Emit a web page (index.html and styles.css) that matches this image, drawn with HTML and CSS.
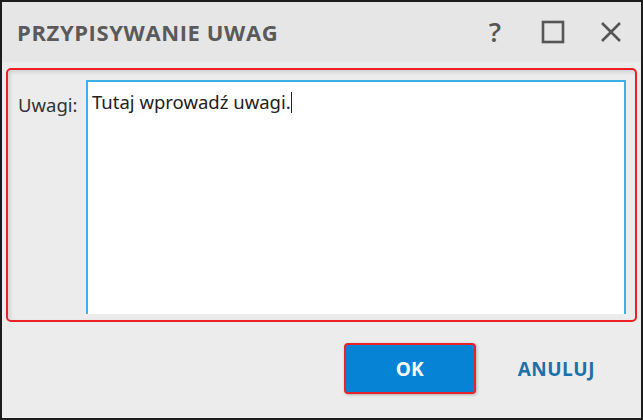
FILE: index.html
```html
<!DOCTYPE html>
<html lang="pl">
  <head>
    <meta charset="utf-8" />
    <meta name="viewport" content="width=device-width, initial-scale=1" />
    <title>Przypisywanie uwag</title>
    <link rel="stylesheet" href="styles.css">
  </head>
  <body>
    <div class="dialog">
        <!-- pasek tytulu z ikonami -->
        <div class="titlebar">
            <h1 class="title">PRZYPISYWANIE UWAG</h1>
            <div class="tools">
                <span class="tool help">?</span>
                <span class="tool">
                    <svg width="24" height="24" viewBox="0 0 24 24"><rect x="2" y="2" width="20" height="20" fill="none" stroke="#555" stroke-width="2.6"/></svg>
                </span>
                <span class="tool">
                    <svg width="24" height="24" viewBox="0 0 24 24"><path d="M3 3 L21 21 M21 3 L3 21" stroke="#555" stroke-width="2.6" fill="none"/></svg>
                </span>
            </div>
        </div>
        <!-- pole uwag -->
        <div class="content">
            <label class="label" for="notes">Uwagi:</label>
            <div class="notes" id="notes">Tutaj wprowadź uwagi.<span class="caret"></span></div>
        </div>
        <div class="footer">
            <button type="button" class="btn-ok">OK</button>
            <button type="button" class="btn-cancel">ANULUJ</button>
        </div>
    </div>
  </body>
</html>
```

FILE: styles.css
```css
html, body {
    margin: 0;
    padding: 0;
}

body {
    font-family: "Noto Sans", "Open Sans", sans-serif;
}

.dialog {
    width: 643px;
    height: 420px;
    box-sizing: border-box;
    border: 2px solid #1c1c1c;
    background-color: #ececec;
    display: flex;
    flex-direction: column;
}

.titlebar {
    height: 60px;
    flex-shrink: 0;
    background-color: #e6e6e6;
    display: flex;
    align-items: center;
    justify-content: space-between;
    padding: 0 18px 0 15px;
}

.title {
    margin: 0;
    font-family: "Open Sans", sans-serif;
    font-size: 22px;
    font-weight: 700;
    color: #5a5a5a;
    letter-spacing: 0.6px;
}

.tools {
    display: flex;
    align-items: center;
    gap: 34px;
}

.tool {
    width: 24px;
    height: 24px;
    display: flex;
    align-items: center;
    justify-content: center;
}

.help {
    font-family: "Open Sans", sans-serif;
    font-size: 27px;
    font-weight: 600;
    color: #555;
    line-height: 24px;
}

/* czerwona ramka wokol pola */
.content {
    margin: 6px 4px 0 4px;
    height: 254px;
    box-sizing: border-box;
    border: 2px solid #ec2027;
    border-radius: 5px;
    box-shadow: inset 2px 2px 4px rgba(0, 0, 0, 0.12);
    display: flex;
    padding: 10px 9px 6px 10px;
    gap: 8px;
}

.label {
    font-size: 18.5px;
    color: #333;
    padding-top: 12px;
    width: 60px;
}

.notes {
    flex: 1;
    background-color: #fff;
    border: 2px solid #3fb0e6;
    border-bottom: none;
    padding: 7px 4px;
    font-size: 18.5px;
    color: #222;
    line-height: 25px;
}

.caret {
    display: inline-block;
    width: 1px;
    height: 21px;
    background-color: #222;
    vertical-align: -4px;
}

.footer {
    flex: 1;
    display: flex;
    align-items: flex-start;
    justify-content: flex-end;
    padding: 21px 46px 0 0;
    gap: 42px;
}

.btn-ok {
    width: 132px;
    height: 51px;
    border: 2px solid #e5242b;
    border-radius: 4px;
    background-color: #0683d5;
    color: #fff;
    font-family: "Open Sans", sans-serif;
    font-weight: 700;
    font-size: 19px;
    box-shadow: 1px 1px 3px rgba(0, 0, 0, 0.25);
}

.btn-cancel {
    height: 51px;
    border: none;
    background: none;
    padding: 0;
    color: #1e70a8;
    font-family: "Open Sans", sans-serif;
    font-weight: 700;
    font-size: 19px;
    letter-spacing: 0.5px;
}
```
